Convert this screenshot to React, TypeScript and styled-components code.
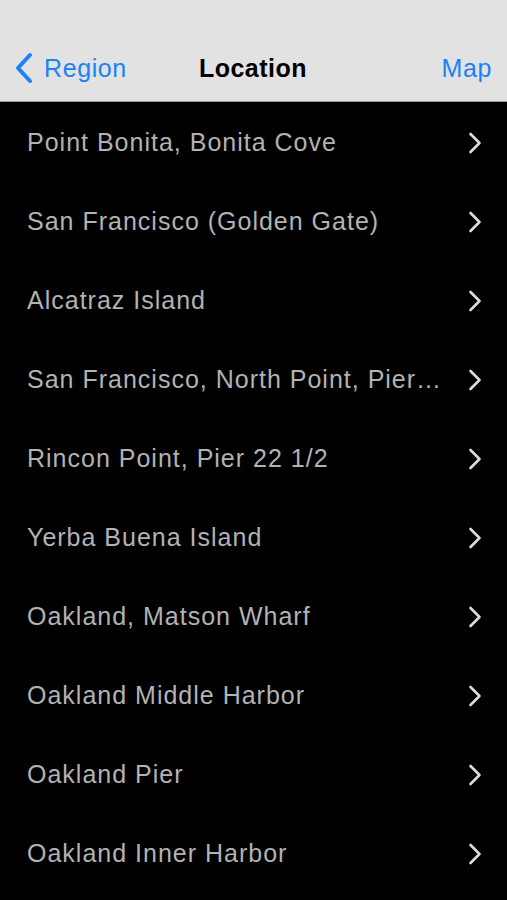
import styled, { createGlobalStyle } from "styled-components";

const GlobalStyle = createGlobalStyle`
  html, body {
    margin: 0;
    padding: 0;
    background: #000;
  }
  body {
    font-family: "Liberation Sans", Arial, sans-serif;
  }
`;

const Screen = styled.div`
  width: 507px;
  height: 900px;
  overflow: hidden;
  background: #000;
  display: flex;
  flex-direction: column;
`;

const NavBar = styled.header`
  height: 102px;
  flex-shrink: 0;
  background: #e2e2e2;
  border-bottom: 1px solid #9a9a9a;
  display: grid;
  grid-template-columns: 1fr auto 1fr;
  align-items: end;
  padding: 0 15px 17px 14px;
  box-sizing: border-box;
`;

const NavButton = styled.button<{ $align: "left" | "right" }>`
  background: none;
  border: none;
  padding: 0;
  height: 32px;
  font-family: inherit;
  font-size: 25px;
  letter-spacing: 0.6px;
  color: #1a82f5;
  display: flex;
  align-items: center;
  gap: 10px;
  justify-self: ${(p) => (p.$align === "left" ? "start" : "end")};
  cursor: pointer;
`;

const Title = styled.h1`
  margin: 0;
  height: 32px;
  display: flex;
  align-items: center;
  font-size: 25px;
  letter-spacing: 0.5px;
  font-weight: 700;
  color: #000;
`;

const List = styled.ul`
  list-style: none;
  margin: 0;
  padding: 1px 0 0;
`;

const Row = styled.li`
  height: 79px;
  display: flex;
  align-items: center;
  gap: 26px;
  padding: 0 25px 0 27px;
`;

const RowLabel = styled.span`
  flex: 1;
  min-width: 0;
  font-size: 25px;
  letter-spacing: 1px;
  color: #b2b2b2;
  white-space: nowrap;
  overflow: hidden;
  text-overflow: ellipsis;
`;

const BackChevron = () => (
  <svg width="20" height="32" viewBox="0 0 20 32">
    <path
      d="M16 3 L4 16 L16 29"
      fill="none"
      stroke="#1a82f5"
      strokeWidth="4"
      strokeLinecap="round"
      strokeLinejoin="round"
    />
  </svg>
);

const Disclosure = () => (
  <svg width="14" height="22" viewBox="0 0 14 22">
    <path
      d="M2.5 2 L11.5 11 L2.5 20"
      fill="none"
      stroke="#dcdcdc"
      strokeWidth="2.6"
      strokeLinecap="round"
      strokeLinejoin="round"
    />
  </svg>
);

const locations = [
  "Point Bonita, Bonita Cove",
  "San Francisco (Golden Gate)",
  "Alcatraz Island",
  "San Francisco, North Point, Pier 41",
  "Rincon Point, Pier 22 1/2",
  "Yerba Buena Island",
  "Oakland, Matson Wharf",
  "Oakland Middle Harbor",
  "Oakland Pier",
  "Oakland Inner Harbor",
];

function App() {
  return (
    <>
      <GlobalStyle />
      <Screen>
        <NavBar>
          <NavButton $align="left">
            <BackChevron />
            Region
          </NavButton>
          <Title>Location</Title>
          <NavButton $align="right">Map</NavButton>
        </NavBar>
        <List>
          {locations.map((name) => (
            <Row key={name}>
              <RowLabel>{name}</RowLabel>
              <Disclosure />
            </Row>
          ))}
        </List>
      </Screen>
    </>
  );
}

export default App;
